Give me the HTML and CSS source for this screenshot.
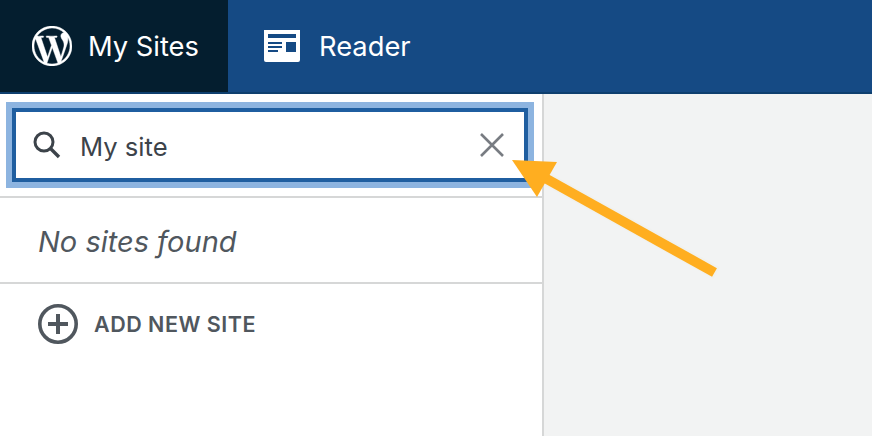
FILE: index.html
```html
<!DOCTYPE html>
<html lang="en">
<head>
<meta charset="utf-8">
<title>My Sites</title>
<link rel="stylesheet" href="styles.css">
</head>
<body>
<header class="masterbar">
  <a class="tab tab-active">
    <svg class="wp-logo" viewBox="2 2 20 20"><path fill="#fff" stroke="#fff" stroke-width=".22" d="M12 2C6.486 2 2 6.486 2 12s4.486 10 10 10 10-4.486 10-10S17.514 2 12 2zM3.01 12c0-1.303.28-2.54.78-3.66l4.287 11.748C5.08 18.632 3.01 15.558 3.01 12zm8.99 8.99c-.883 0-1.734-.13-2.54-.365l2.697-7.835 2.763 7.57c.017.044.04.085.063.124-.934.33-1.94.506-2.983.506zm1.24-13.204c.54-.028 1.027-.085 1.027-.085.484-.058.427-.77-.057-.742 0 0-1.456.114-2.396.114-.883 0-2.368-.114-2.368-.114-.484-.028-.54.712-.057.74 0 0 .46.058.943.086l1.4 3.838-1.968 5.901-3.274-9.739c.542-.028 1.03-.085 1.03-.085.483-.058.426-.77-.058-.742 0 0-1.456.114-2.396.114-.168 0-.367-.004-.58-.01C6.14 4.86 8.88 3.01 12 3.01c2.327 0 4.444.89 6.035 2.346-.038-.002-.076-.007-.116-.007-.883 0-1.508.77-1.508 1.596 0 .74.427 1.368.883 2.108.342.6.74 1.368.74 2.48 0 .77-.296 1.662-.683 2.906l-.895 2.99-3.216-9.643zm3.28 11.98l2.745-7.94c.513-1.282.684-2.307.684-3.22 0-.33-.022-.637-.06-.924.7 1.278 1.1 2.744 1.1 4.304 0 3.31-1.795 6.2-4.47 7.78z"/></svg>
    <span>My Sites</span>
  </a>
  <a class="tab tab-reader">
    <svg class="reader-icon" viewBox="0 0 36 32"><path fill="#fff" fill-rule="evenodd" d="M0 0h36v30a2 2 0 0 1-2 2H2a2 2 0 0 1-2-2zM4 4v4h28V4zM4 12v2h14v-2zM22 12v10h10V12zM4 16v2h14v-2zM4 20v2h10v-2z"/></svg>
    <span>Reader</span>
  </a>
</header>
<div class="content">
  <aside class="sidebar">
    <div class="search-wrap">
      <div class="search">
        <svg class="search-icon" viewBox="0 0 30 30"><circle cx="12" cy="12" r="9" fill="none" stroke="#3c434a" stroke-width="3"/><path d="M18.5 18.5 27 27" stroke="#3c434a" stroke-width="3.4" fill="none"/></svg>
        <span class="search-text">My site</span>
        <svg class="clear-icon" viewBox="0 0 24 24"><path d="M1 1 23 23M23 1 1 23" stroke="#787c82" stroke-width="2.6" fill="none"/></svg>
      </div>
    </div>
    <p class="empty">No sites found</p>
    <div class="add-site">
      <svg class="plus-icon" viewBox="0 0 40 40"><circle cx="20" cy="20" r="18.2" fill="none" stroke="#50575e" stroke-width="3.6"/><path d="M20 10v20M10 20h20" stroke="#50575e" stroke-width="4" fill="none"/></svg>
      <span>ADD NEW SITE</span>
    </div>
  </aside>
  <main class="main"></main>
</div>
<svg class="arrow" viewBox="0 0 872 436"><path d="M716.5 273 545 178" stroke="#f0f1ee" stroke-width="13" fill="none"/><path d="M714.5 272.5 545 178" stroke="#ffae20" stroke-width="10" fill="none"/><path d="M512 160 557 162 537 197z" fill="#ffae20"/></svg>
</body>
</html>
```
FILE: styles.css
```css
* { box-sizing: border-box; }
html, body { margin: 0; height: 100%; }
body { position: relative; width: 872px; height: 436px; overflow: hidden; font-family: Inter, "Liberation Sans", sans-serif; background: #fff; }
.masterbar { display: flex; height: 94px; background: #154a84; border-bottom: 2px solid #0e3f6e; }
.tab { display: flex; align-items: center; color: #fff; font-size: 27.3px; height: 92px; }
.tab-active { width: 228px; padding-left: 32px; gap: 16px; background: #041e2f; }
.tab-reader { padding-left: 36px; gap: 19px; }
.wp-logo { width: 40px; height: 40px; }
.reader-icon { width: 36px; height: 32px; }
.content { display: flex; height: 342px; }
.sidebar { width: 544px; border-right: 2px solid #d6d7d7; display: flex; flex-direction: column; }
.search-wrap { padding: 8px 8px 8px 6px; border-bottom: 2px solid #d6d7d7; height: 104px; }
.search { display: flex; align-items: center; height: 86px; border: 6px solid #8db4e0; outline: 4px solid #1f5ea0; outline-offset: -10px; padding: 0 16px 0 20px; background: #fff; }
.search-icon { width: 30px; height: 30px; }
.search-text { margin-left: 18px; padding-top: 2px; font-size: 25.6px; color: #3c434a; flex: 1; }
.clear-icon { width: 24px; height: 24px; margin-right: 8px; }
.empty { margin: 0; height: 86px; border-bottom: 2px solid #d6d7d7; padding: 3px 0 0 38px; display: flex; align-items: center; font-size: 29px; font-style: italic; color: #50575e; }
.add-site { display: flex; align-items: center; gap: 16px; padding: 20px 0 0 38px; color: #50575e; font-size: 21.5px; font-weight: 600; letter-spacing: 0.5px; }
.plus-icon { width: 40px; height: 40px; }
.main { flex: 1; background: #f2f3f3; }
.arrow { position: absolute; left: 0; top: 0; width: 872px; height: 436px; pointer-events: none; }
```
